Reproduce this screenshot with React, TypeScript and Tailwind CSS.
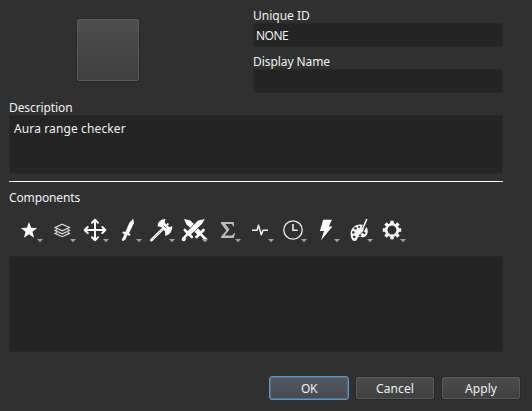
import type { ReactNode } from "react";

const stroke = { fill: "none", stroke: "#eee" } as const;

const icons: { name: string; art: ReactNode }[] = [
  { name: "Star", art: <path d="M16 10l2.1 5.8 6.2.2-4.9 3.8 1.7 6-5.1-3.5-5.1 3.5 1.7-6L7.7 16l6.2-.2z" /> },
  {
    name: "Layers",
    art: (
      <g {...stroke} stroke="#ddd" strokeWidth="1.2">
        <path d="M16.3 12.2l7.2 3.3-7.2 3.3-7.2-3.3z" />
        <path d="M11 17.6l-1.9.9 7.2 3.3 7.2-3.3-1.9-.9" />
        <path d="M11 20.5l-1.9.9 7.2 3.3 7.2-3.3-1.9-.9" />
      </g>
    ),
  },
  {
    name: "Move",
    art: (
      <g {...stroke} stroke="#fff" strokeWidth="2" strokeLinecap="round" strokeLinejoin="round">
        <path d="M16 8v20M6 18h20M13 10.7l3-3 3 3M13 25.3l3 3 3-3M8.7 15l-3 3 3 3M23.3 15l3 3-3 3" />
      </g>
    ),
  },
  {
    name: "Weapon",
    art: <path d="M21.2 6.8l.8 4.2-5 10.2 1.6 1.4-.8 1.2-2.4-.9-2.2 4.8-2.7 1.5-.6-1.8 2.6-5.2-2.2-1.3.7-1.5 2.3.6 4.2-9.6z" />,
  },
  {
    name: "Axe",
    art: (
      <>
        <path d="M6.3 28.2L21 13.8" stroke="#fff" strokeWidth="2.6" strokeLinecap="round" />
        <path d="M12.8 14.6c-.6-4.4 3-7.7 8-7.6-1.2 1.4-1.3 2.8-.6 4.3l1.4 1.2 1-1.7 1.5 1.4-1.6 1.2 1 1.2c1.3.8 2.6.4 3.7-.9.3 5.5-2.6 9.5-7.2 10 .6-2.2.4-3.9-.9-5.3l-2.6-3.2c-1.2-.9-2.5-1-3.7-.6z" />
        <path d="M8 26.8l9-8.9" stroke="#303030" strokeWidth=".7" strokeDasharray="1 1.2" />
        <path d="M18.2 13.2l3.2 3.2" stroke="#303030" strokeWidth=".7" />
      </>
    ),
  },
  {
    name: "Combat",
    art: (
      <>
        <path d="M6 7l6.4 1.4 11.4 11.8-3.4 3.2L8.4 12.2z" />
        <path d="M18.5 25l7-7M22.8 22.2l4.2 4.4" stroke="#fff" strokeWidth="2.6" strokeLinecap="round" />
        <circle cx="27" cy="27.3" r="2" />
        <path d="M27.3 6.6l-7.2 1.6L8.3 20l3.8 3.6 12.5-12z" stroke="#303030" strokeWidth=".7" />
        <path d="M6.8 18l7 7M9.4 22.2l-4 4.4" stroke="#fff" strokeWidth="2.6" strokeLinecap="round" />
        <circle cx="5.7" cy="27.3" r="2" />
      </>
    ),
  },
  {
    name: "Sum",
    art: <path fill="#bbb" d="M10 10h12.8l.4 4.2h-1.1c-.5-1.7-1.1-2.2-2.8-2.2h-5l4.3 5.6-5 6h5.7c2 0 2.9-.7 3.7-2.7h1l-1.2 5.1H10v-1.3l5.3-6.2-5.3-7z" />,
  },
  {
    name: "Pulse",
    art: <path d="M8 18.2h5l1.5-4.9 2.8 9.4 1.7-4.5h5" {...stroke} strokeWidth="1.5" strokeLinejoin="round" />,
  },
  {
    name: "Clock",
    art: (
      <g {...stroke}>
        <circle cx="16" cy="18" r="9.2" strokeWidth="1.3" />
        <path d="M16 12v6.3h4.7" strokeWidth="1.6" />
      </g>
    ),
  },
  { name: "Bolt", art: <path d="M13.2 7.7h8.7l-3 6.7h3.6L11 28.2l3-9.2H9.9z" /> },
  {
    name: "Palette",
    art: (
      <>
        <path fillRule="evenodd" d="M17.7 12.6c-5.7-.2-10 4-10 9 0 4.3 1.3 7.5 4 7.5 3 0 2-3 3.7-4 2-1.2 3.3 1 5.7 0 4-1.7 4.5-7 2.4-10.2l-3.2 5.7-2.6 1.3.2-3 1.9-6.2zM12.4 15a1.5 1.3 0 1 0 .1 0zM10.3 19a1.3 1.4 0 1 0 .1 0zM11.2 23.4a1.4 1.4 0 1 0 .1 0zM17 22.2a1.3 1 0 1 0 .1 0zM21.3 19.8a1.2 1.2 0 1 0 .1 0zM16 14a1 1 0 1 0 .1 0z" />
        <path d="M23.8 7l-4.8 11.5" stroke="#fff" strokeWidth="1.5" />
        <path d="M19 16.5l1.5.8c0 2-1.4 3.5-3.5 4 .8-1.7.5-3.4 2-4.8z" />
      </>
    ),
  },
  {
    name: "Settings",
    art: (
      <>
        <circle cx="16" cy="18" r="5.8" {...stroke} stroke="#fff" strokeWidth="2.6" />
        <path d="M16 8.8v3M16 24.2v3M6.8 18h3M22.2 18h3M9.5 11.5l2.1 2.1M20.4 22.4l2.1 2.1M9.5 24.5l2.1-2.1M20.4 13.6l2.1-2.1" stroke="#fff" strokeWidth="3.4" />
      </>
    ),
  },
];

function Label({ children, className = "" }: { children: ReactNode; className?: string }) {
  return <div className={`h-[15px] leading-[15px] whitespace-nowrap ${className}`}>{children}</div>;
}

const button =
  "h-[22px] w-[78px] rounded-[2px] border border-[#5a5a5a] bg-linear-to-b from-[#4b4b4b] to-[#404040] text-center leading-[21px] tracking-[0.1px] shadow-[0_0_0_1px_#292929]";

export default function App() {
  return (
    <main className="h-[411px] w-[532px] overflow-hidden bg-[#303030] pt-2 pl-[9px] font-['Noto_Sans',sans-serif] text-[12px] text-[#f0f0f0]">
      <section className="flex h-[92px] w-[494px] justify-between">
        <button
          aria-label="Icon"
          className="mt-[11px] ml-[68px] size-[62px] rounded-[2px] border border-[#5a5a5a] bg-linear-to-b from-[#4d4d4d] to-[#404040] shadow-[0_0_0_1px_#292929]"
        />
        <div className="w-[250px]">
          <Label>Unique ID</Label>
          <div className="h-6 rounded-[3px] border border-[#292929] bg-[#242424] pl-[2px] leading-[23px] tracking-[-0.5px]">NONE</div>
          <div className="mt-[7px]">
            <Label className="tracking-[-0.07px]">Display Name</Label>
          </div>
          <div className="h-6 rounded-[3px] border border-[#292929] bg-[#242424]" />
        </div>
      </section>
      <section className="w-[494px]">
        <Label className="tracking-[-0.1px]">Description</Label>
        <div className="h-[59px] border border-[#292929] bg-[#242424] pt-[5px] pl-1 leading-4 tracking-[0.12px]">Aura range checker</div>
        <div className="mt-[7px] h-px bg-white" />
      </section>
      <section className="mt-2 w-[494px]">
        <Label className="tracking-[-0.14px]">Components</Label>
        <div className="mt-[7px] ml-1 flex h-9">
          {icons.map(({ name, art }) => (
            <svg key={name} aria-label={name} width="33" height="36" viewBox="0 0 33 36" fill="#fff" className="shrink-0">
              {art}
              <path d="M24 27h6l-3 3.2z" fill="#a0a0a0" />
            </svg>
          ))}
        </div>
        <div className="mt-2 h-24 border border-[#292929] bg-[#242424]" />
      </section>
      <footer className="mt-6 mr-3 flex items-center justify-end gap-2">
        <button className="-mr-px h-6 w-20 rounded-[3px] border border-[#4c9ae0] bg-linear-to-b from-[#535861] to-[#454b53] pt-px text-center leading-[22px] tracking-[-0.3px] shadow-[inset_0_0_0_1px_#646a73]">
          OK
        </button>
        <button className={button}>Cancel</button>
        <button className={button}>Apply</button>
      </footer>
    </main>
  );
}
